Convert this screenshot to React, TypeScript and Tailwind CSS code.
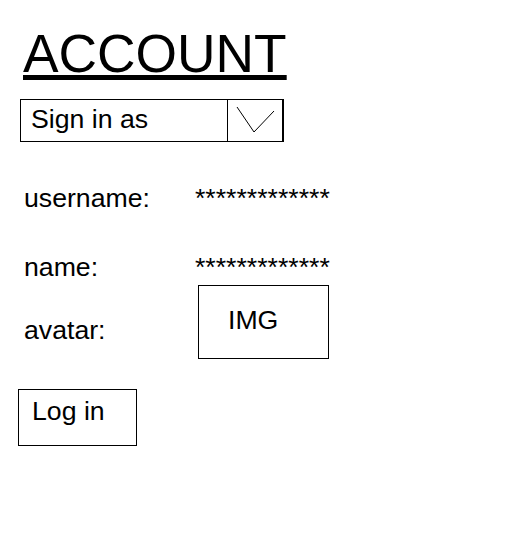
export default function App() {
  return (
    <div className="w-[509px] h-[546px] bg-white text-black font-['Liberation_Sans',Arial,sans-serif] flex flex-col items-start">
      <h1 className="mt-[24px] ml-[23px] text-[53.33px] leading-[60px] underline font-normal">ACCOUNT</h1>
      <div className="mt-[15px] ml-[20px] w-[264px] h-[43px] border border-black border-r-2 flex">
        <div className="w-[207px] h-full border-r border-black pl-[10px] pt-[4px] text-[26.67px] leading-[30px]">Sign in as</div>
        <div className="flex-1 h-full">
          <svg width="54" height="41" viewBox="0 0 54 41">
            <polyline points="9,7 26,32 46,11" fill="none" stroke="black" strokeWidth="1" />
          </svg>
        </div>
      </div>
      <div className="mt-[41px] flex text-[26.67px] leading-[30px]">
        <div className="ml-[24px] w-[171px]">username:</div>
        <div>*************</div>
      </div>
      <div className="mt-[39px] flex text-[26.67px] leading-[30px]">
        <div className="ml-[24px] w-[171px]">name:</div>
        <div>*************</div>
      </div>
      <div className="flex items-start text-[26.67px] leading-[30px]">
        <div className="ml-[24px] w-[171px] mt-[33px]">avatar:</div>
        <div className="mt-[3px] ml-[3px] w-[131px] h-[74px] border border-black pl-[29px] pt-[19px]">IMG</div>
      </div>
      <div className="mt-[30px] ml-[18px] w-[119px] h-[57px] border border-black pl-[13px] pt-[6px] text-[26.67px] leading-[30px]">Log in</div>
    </div>
  );
}
